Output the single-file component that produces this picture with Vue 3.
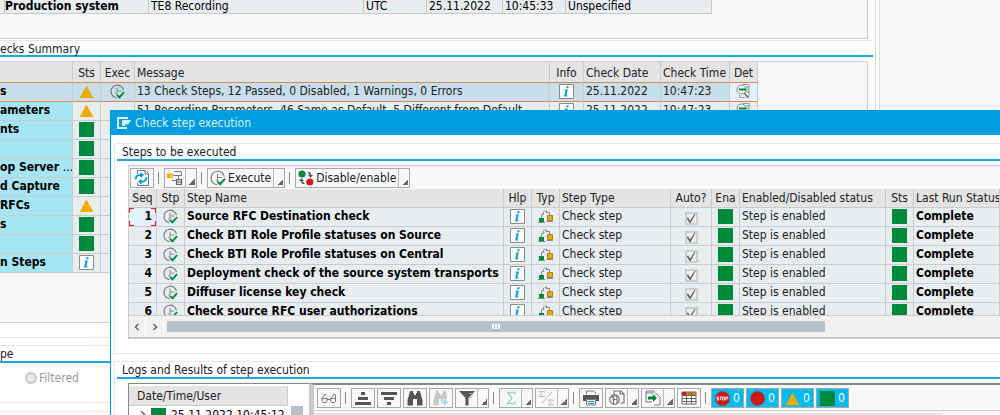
<template>
    <div class="screen">
        <svg class="sprite" aria-hidden="true">
            <symbol id="warn" viewBox="0 0 15 15"><path d="M7.5 1.5 14.3 14H.7z" fill="#f0ab00" /></symbol>
            <symbol id="ok" viewBox="0 0 15 15"><path d="M0 0h15v15H0z" fill="#008a3b" /></symbol>
            <symbol id="error" viewBox="0 0 15 15"><circle cx="7.5" cy="7.5" r="7.2" fill="#cc1919" /></symbol>
            <symbol id="stop" viewBox="0 0 15 15">
                <path d="M4.6.5h5.8l4.1 4.1v5.8l-4.1 4.1H4.6L.5 10.4V4.6z" fill="#cc1919" />
                <path d="M3.8 6H1.9v1.5h1.7V9H1.6M4.6 6h2.2M5.7 6v3.2M7.6 6h1.8v3H7.6zM10.8 9.4V6h2v1.7h-2" fill="none" stroke="#fff" stroke-width=".9" />
            </symbol>
            <symbol id="info" viewBox="0 0 15 15">
                <path d="M.5.5h14v14H.5z" fill="#fff" stroke="#8b8b8b" />
                <path d="M7.6 2.2h2.1l-.5 2H7.1zM5.7 5.5h3.1l-1.4 5.9h1.3l-.3 1.1H5.1l1.4-5.9H5.4z" fill="#009de0" />
            </symbol>
            <symbol id="exec" viewBox="0 0 16 16">
                <path d="M14.3 6.6A6.7 6.7 0 1 0 7 14.6" fill="none" stroke="#757575" stroke-width="1.2" />
                <path d="M7.5 4v6.5M5.5 10.5h2M7.500 7.500H12" fill="none" stroke="#858585" />
                <path d="m7.5 11.5 2.5 2.700L15 8.600" fill="none" stroke="#008a3b" stroke-width="2" />
            </symbol>
            <symbol id="detail" viewBox="0 0 15 15">
                <path d="M7 .5h6v13h-2" fill="none" stroke="#999" />
                <circle cx="5.5" cy="5.5" r="4.5" fill="#f4f8fa" stroke="#888" />
                <path d="M3 5.500h7" stroke="#008a3b" stroke-width="2" />
                <path d="M10 3h2.500M11 5.500h1.500M10 8h2.500" stroke="#3aa568" />
                <path d="m8 9 4 4.500" stroke="#777" stroke-width="1.800" /><path d="M3.500 13.500h5M3.500 11v2.500" stroke="#999" />
            </symbol>
            <symbol id="type" viewBox="0 0 15 15">
                <path d="M3.500 9V5.500h2M5.500 5.500V3M6 1.500l2 2h3.500v3M8.500 1.500v2" fill="none" stroke="#8a8a8a" />
                <path d="M1 9h5v4H1z" fill="#008a3b" /><path d="M9.500 6.500h5v5h-5z" fill="#f0ab00" stroke="#a88030" />
                <path d="M0 13.500h7M8.500 12.500h6.500" stroke="#888" />
            </symbol>
            <symbol id="refresh" viewBox="0 0 16 16">
                <path d="M3.500 4V.5h8l3 3v12h-11V13" fill="#fff" stroke="#777" /><path d="M11 .5v3.500h3.500" fill="none" stroke="#777" />
                <path d="M1.500 9.500C1.500 6 4 4.800 7 5M12.500 7c0 3.600-2.500 5-5.500 4.700" fill="none" stroke="#009de0" stroke-width="1.800" />
                <path d="m6.500 2 3.500 3-3.500 3zM7.500 8.700v6L4 11.700z" fill="#009de0" />
            </symbol>
            <symbol id="tree" viewBox="0 0 16 16">
                <path d="M0 3.500h6V8H0z" fill="#f0ab00" /><path d="m3 5.700 1 1 2-2" fill="none" stroke="#fff" />
                <path d="M6 5.500h5M7 1.500h7.500v4H11M5 10.500h4M11.500 6v3" fill="none" stroke="#777" />
                <path d="M9.500 9.500h5v5h-5zM9.500 12h5" fill="#ddd" stroke="#666" stroke-width="1.200" />
            </symbol>
            <symbol id="toggle" viewBox="0 0 16 16">
                <circle cx="4" cy="4" r="3.600" fill="#008a3b" /><circle cx="11.800" cy="12" r="3.600" fill="#cc1919" />
                <path d="M10 2.500c2 0 2.500 1.500 2.500 3.500M3.500 10c0 2 .8 3.500 3 3.500" fill="none" stroke="#555" stroke-width="1.500" />
                <path d="M10 5h5l-2.500 2.800zM1 11l2.500-2.800L6 11z" fill="#555" />
            </symbol>
            <symbol id="glasses" viewBox="0 0 16 16">
                <g fill="none" stroke="#777"><path d="M1 8.500h5v2.500l-1 1.500H2L1 11zM9.500 8.500h5V11l-1 1.500h-3l-1-1.500zM6 9.500h3.500M1 8.500 4 4l1.500 1M10 8.500 13 4l1.500 1v3.500" /></g>
            </symbol>
            <symbol id="asc" viewBox="0 0 16 16"><path d="M6 2h4v3H6zM3 7h10v3H3zM0 12h16v3H0z" fill="#555" /></symbol>
            <symbol id="desc" viewBox="0 0 16 16"><path d="M0 2h16v3H0zM3 7h10v3H3zM6 12h4v3H6z" fill="#555" /></symbol>
            <symbol id="find" viewBox="0 0 16 16"><path d="M3 1h3v2h1v2h2V3h1V1h3l1 4 1.500 5v5.500H10V9H6v6.500H.5V10L2 5z" fill="#555" /></symbol>
            <symbol id="findnext" viewBox="0 0 16 16">
                <path d="M3 1h3v2h1v2h2V3h1V1h3l1 4v4h-4v2H8V9H6v6.500H.5V10L2 5z" fill="#c8c8c8" />
                <path d="M12 9v6.500M8.800 12.200h6.500" stroke="#a5d9f5" stroke-width="2" />
            </symbol>
            <symbol id="filter" viewBox="0 0 16 16">
                <path d="M0 1h16L9.500 8v7.500h-3V8z" fill="#555" /><path d="M10 3.500h3v3L10 9" fill="none" stroke="#aaa" />
            </symbol>
            <symbol id="sum" viewBox="0 0 16 16"><path d="M12 5V2.500H4.500L9 8l-4.500 5.500H12V11" fill="none" stroke="#9ed5b2" stroke-width="1.300" /></symbol>
            <symbol id="subtotal" viewBox="0 0 16 16">
                <path d="M5.500 2.500v-1H.5L3 4 .5 6.500h5v-1M14.500 11v-1h-5L12 12.500 9.500 15h5v-1M13 2 3 13" fill="none" stroke="#bbb" />
            </symbol>
            <symbol id="print" viewBox="0 0 16 16">
                <path d="M3.500 4V1h7l2 2v1" fill="none" stroke="#777" /><path d="M0 5h16v6h-3V9H3v2H0z" fill="#555" />
                <path d="M3.500 9.500h9v5.500h-9z" fill="#fff" stroke="#777" /><path d="M5 11.500h6M5 13.500h6" stroke="#009de0" />
            </symbol>
            <symbol id="views" viewBox="0 0 16 16">
                <g fill="none" stroke="#777" stroke-width="1.200"><circle cx="5.500" cy="9.500" r="4.800" /><path d="M5 4V1h7l3 3v9h-4M11 1v3h3M8 14V6H3v2M3.500 9.500H8M4.500 6v8" /></g>
            </symbol>
            <symbol id="export" viewBox="0 0 16 16">
                <path d="M9 3V1H1v11h6M10 4h2l3 3v8H9" fill="none" stroke="#777" /><path d="M1 3h7" stroke="#777" />
                <path d="M3 6.500h5V4l4 4-4 4V9.500H3z" fill="#008a3b" />
            </symbol>
            <symbol id="layout" viewBox="0 0 16 16">
                <path d="M1 2h14v12H1z" fill="#fff" stroke="#666" /><path d="M1 2h4v3H1z" fill="#cc1919" /><path d="M5 2h10v3H5z" fill="#c27b16" />
                <path d="M1 5.500h14M1 8.500h14M1 11.500h14M5.500 5v9M10.500 2v12" stroke="#666" />
            </symbol>
        </svg>

        <main class="main">
            <section class="system">
                <div class="system-row">
                    <span></span><b>Production system</b><span>TE8 Recording</span><span>UTC</span>
                    <span>25.11.2022</span><span>10:45:33</span><span>Unspecified</span>
                </div>
            </section>
            <h2 class="main-title">ecks Summary</h2>
            <div class="summary">
                <table class="grid">
                    <colgroup>
                        <col class="w-name"><col class="w-icon"><col class="w-exec"><col><col class="w-exec">
                        <col class="w-date"><col class="w-time"><col class="w-icon">
                    </colgroup>
                    <thead>
                        <tr>
                            <th></th><th class="center">Sts</th><th class="center">Exec</th><th>Message</th>
                            <th class="center">Info</th><th>Check Date</th><th>Check Time</th><th class="center">Det</th>
                        </tr>
                    </thead>
                    <tbody>
                        <tr v-for="(row, i) in checks" :key="i" :class="{ selected: i === 0 }">
                            <td class="name">{{ row.name }} <span v-if="row.more">...</span></td>
                            <td class="center"><svg class="icon"><use :href="'#' + row.status" /></svg></td>
                            <td class="center"><svg v-if="i === 0" class="icon"><use href="#exec" /></svg></td>
                            <td>{{ row.message }}</td>
                            <td class="center"><svg v-if="row.message" class="icon"><use href="#info" /></svg></td>
                            <td>{{ row.message && '25.11.2022' }}</td>
                            <td>{{ row.message && '10:47:23' }}</td>
                            <td class="center det"><svg v-if="row.message" class="icon"><use href="#detail" /></svg></td>
                        </tr>
                    </tbody>
                </table>
            </div>
            <div class="panel-end"></div>
            <section class="type">
                <h2 class="main-title">pe</h2>
                <label class="radio"><input type="radio" name="type" disabled>Filtered</label>
            </section>
            <div class="footer-line"></div>
        </main>
        <aside class="side"></aside>

        <div class="dialog" role="dialog" aria-labelledby="dialog-title">
            <header class="dialog-head">
                <svg viewBox="0 0 15 12"><path d="M11 1H1v10h9" fill="none" stroke="#d9f0fb" stroke-width="2" /><path d="M5 3h9.500L11 7.500H8V9H5z" fill="#d9f0fb" /></svg>
                <span id="dialog-title">Check step execution</span>
            </header>
            <section class="group">
                <h3>Steps to be executed</h3>
                <div class="box">
                    <div class="toolbar">
                        <button class="btn square" aria-label="Refresh"><svg><use href="#refresh" /></svg></button>
                        <i class="sep"></i>
                        <span class="split"><button class="btn" aria-label="Hierarchy"><svg><use href="#tree" /></svg></button><button class="drop" aria-label="Hierarchy menu"></button></span>
                        <i class="sep"></i>
                        <span class="split"><button class="btn"><svg><use href="#exec" /></svg>Execute</button><button class="drop" aria-label="Execute menu"></button></span>
                        <i class="sep"></i>
                        <span class="split"><button class="btn"><svg><use href="#toggle" /></svg>Disable/enable</button><button class="drop" aria-label="Disable/enable menu"></button></span>
                    </div>
                    <div class="steps">
                        <table class="grid">
                            <colgroup>
                                <col class="w-icon"><col class="w-icon"><col class="w-step"><col class="w-icon"><col class="w-icon">
                                <col class="w-type"><col class="w-auto"><col class="w-icon"><col class="w-enabled"><col class="w-icon"><col>
                            </colgroup>
                            <thead>
                                <tr>
                                    <th class="center">Seq</th><th class="center">Stp</th><th>Step Name</th><th class="center">Hlp</th>
                                    <th class="center">Typ</th><th>Step Type</th><th class="center">Auto?</th><th class="center">Ena</th>
                                    <th>Enabled/Disabled status</th><th class="center">Sts</th><th>Last Run Status</th>
                                </tr>
                            </thead>
                            <tbody>
                                <tr v-for="(step, i) in steps" :key="step">
                                    <td class="seq" :class="{ current: i === 0 }">{{ i + 1 }}</td>
                                    <td class="center"><svg class="icon"><use href="#exec" /></svg></td>
                                    <td class="bold">{{ step }}</td>
                                    <td class="center"><svg class="icon"><use href="#info" /></svg></td>
                                    <td class="center"><svg class="icon"><use href="#type" /></svg></td>
                                    <td>Check step</td>
                                    <td class="center"><input type="checkbox" checked disabled :aria-label="'Auto ' + step"></td>
                                    <td class="center"><svg class="icon"><use href="#ok" /></svg></td>
                                    <td>Step is enabled</td>
                                    <td class="center"><svg class="icon"><use href="#ok" /></svg></td>
                                    <td class="bold">Complete</td>
                                </tr>
                            </tbody>
                        </table>
                    </div>
                    <div class="scroll">
                        <button aria-label="Scroll left"><svg viewBox="0 0 6 8"><path d="M4.500 1 1.500 4l3 3" /></svg></button>
                        <button aria-label="Scroll right"><svg viewBox="0 0 6 8"><path d="m1.500 1 3 3-3 3" /></svg></button>
                        <div class="thumb"><i></i><i></i><i></i></div>
                    </div>
                </div>
            </section>
            <section class="group logs">
                <h3>Logs and Results of step execution</h3>
                <div class="panes">
                    <div class="tree">
                        <div class="tree-list">
                            <div class="tree-head">Date/Time/User</div>
                            <div class="tree-row">
                                <svg class="chevron" viewBox="0 0 6 8"><path d="m1 0 4 4-4 4" /></svg>
                                <svg class="icon"><use href="#ok" /></svg>
                                <span>25.11.2022 10:45:12</span>
                            </div>
                        </div>
                        <div class="tree-scroll"></div>
                    </div>
                    <div class="result">
                        <div class="toolbar">
                            <template v-for="(tool, i) in tools" :key="i">
                                <i v-if="tool === '|'" class="sep"></i>
                                <span v-else-if="tool.menu" class="split">
                                    <button class="btn" :aria-label="tool.icon"><svg><use :href="'#' + tool.icon" /></svg></button>
                                    <button class="drop" :aria-label="tool.icon + ' menu'"></button>
                                </span>
                                <button v-else class="btn square" :aria-label="tool.icon"><svg><use :href="'#' + tool.icon" /></svg></button>
                            </template>
                            <button v-for="s in ['stop', 'error', 'warn', 'ok']" :key="s" class="btn count">
                                <svg><use :href="'#' + s" /></svg>0
                            </button>
                        </div>
                        <div class="result-head"><span></span></div>
                    </div>
                </div>
            </section>
        </div>
    </div>
</template>

<script setup>
const checks = [
    { name: 's', status: 'warn', message: '13 Check Steps, 12 Passed, 0 Disabled, 1 Warnings, 0 Errors' },
    { name: 'ameters', status: 'warn', message: '51 Recording Parameters, 46 Same as Default, 5 Different from Default' },
    { name: 'nts', status: 'ok' },
    { name: '', status: 'ok' },
    { name: 'op Server', status: 'ok', more: true },
    { name: 'd Capture', status: 'ok' },
    { name: 'RFCs', status: 'warn' },
    { name: 's', status: 'ok' },
    { name: '', status: 'ok' },
    { name: 'n Steps', status: 'info' },
];

const steps = [
    'Source RFC Destination check',
    'Check BTI Role Profile statuses on Source',
    'Check BTI Role Profile statuses on Central',
    'Deployment check of the source system transports',
    'Diffuser license key check',
    'Check source RFC user authorizations',
];

const tools = [
    { icon: 'glasses' },
    '|',
    { icon: 'asc' },
    { icon: 'desc' },
    { icon: 'find' },
    { icon: 'findnext' },
    { icon: 'filter', menu: true },
    '|',
    { icon: 'sum', menu: true },
    { icon: 'subtotal', menu: true },
    '|',
    { icon: 'print' },
    { icon: 'views', menu: true },
    { icon: 'export', menu: true },
    { icon: 'layout' },
    '|',
];
</script>

<style>
body {
    overflow: hidden;
}
</style>

<style scoped>
.screen {
    position: relative;
    display: flex;
    height: 100vh;
    overflow: hidden;
    background: #fff;
    color: #222;
    font: 12px/16px Tahoma, "DejaVu Sans Condensed", "DejaVu Sans", sans-serif;
    white-space: nowrap;
}

.screen * {
    box-sizing: border-box;
}

.sprite {
    position: absolute;
    width: 0;
    height: 0;
}

h2,
h3 {
    margin: 0;
    font-size: 12px;
    font-weight: normal;
}

button {
    padding: 0;
    border: 0;
    background: none;
    color: inherit;
    font: inherit;
}

.main {
    flex: 1;
    min-width: 0;
    border-right: 1px solid #ddd;
}

.side {
    flex: 0 0 121px;
    margin-left: 3px;
    border-left: 1px solid #ddd;
    background: #f9f9f9;
}

.system {
    height: 39px;
    margin-right: 7px;
    border: solid #c9c9c9;
    border-width: 0 1px 1px 0;
    background: #f9f9f9;
}

.system-row {
    display: grid;
    grid-template-columns: 3px 146px 215px 63px 76px 63px 146px;
    align-items: end;
    width: 712px;
    height: 14px;
    overflow: hidden;
    border-bottom: 1px solid #c9c9c9;
    background: #e8edf0;
    color: #000;
}

.system-row > * {
    height: 18px;
    padding: 0 2px;
    border-right: 1px solid #c9c9c9;
    line-height: 12px;
}

.main-title {
    height: 18px;
    border-top: 1px solid #e8e8e8;
    border-bottom: 2px solid #1ba7e3;
    margin-right: 2px;
}

.system + .main-title {
    margin-top: 1px;
    height: 17px;
}

.summary {
    height: 262px;
    margin: 4px 7px 0 0;
    padding-right: 109px;
    border: solid #d0d0d0;
    border-width: 1px 1px 1px 0;
    background: #f7f7f7;
}

.grid {
    width: 100%;
    table-layout: fixed;
    border-collapse: separate;
    border-spacing: 0;
}

.grid th,
.grid td {
    height: 19px;
    padding: 0 0 0 2px;
    overflow: hidden;
    border: solid #cbcbcb;
    border-width: 0 1px 1px 0;
    background: #e8edf0;
    font-weight: normal;
    text-align: left;
    vertical-align: top;
}

.grid th {
    padding-top: 1px;
    background: #e4e4e4;
}

.grid td.center {
    padding: 0;
}

.grid .center {
    padding-left: 0;
    text-align: center;
}

.grid.grid .bold,
.grid.grid .name,
.grid.grid .seq {
    color: #000;
    font-weight: bold;
}

.summary th {
    height: 21px;
    padding-top: 3px;
    border-bottom-color: #dd8a58;
}

.summary .name {
    padding: 0;
    background: #a6e5f4;
}

.name span {
    font-weight: normal;
}

.summary .selected td {
    border-bottom-color: #dd8a58;
    background: #c7dfea;
}

.summary .selected .det {
    background: #e5f2fb;
}

.icon {
    display: block;
    width: 15px;
    height: 15px;
    margin: 1px auto 0;
}

.w-name {
    width: 73px;
}

.w-icon {
    width: 28px;
}

.w-exec {
    width: 34px;
}

.w-date {
    width: 77px;
}

.w-time {
    width: 69px;
}

.w-step {
    width: 319px;
}

.w-type {
    width: 111px;
}

.w-auto {
    width: 41px;
}

.w-enabled {
    width: 146px;
}

.panel-end {
    height: 15px;
    border-bottom: 1px solid #e8e8e8;
}

.type {
    height: 58px;
    margin-top: 7px;
    border-bottom: 1px solid #e8e8e8;
}

.radio {
    display: flex;
    align-items: center;
    gap: 2px;
    padding: 7px 0 0 25px;
    color: #999;
}

.radio input {
    width: 12px;
    height: 12px;
    margin: 0;
    appearance: none;
    border: 2px solid #c8c8c8;
    border-radius: 50%;
    background: #e4e8ea;
}

.footer-line {
    height: 9px;
    border-bottom: 1px solid #e8e8e8;
}

.dialog {
    position: absolute;
    inset: 110px 0 0 110px;
    overflow: hidden;
    border-left: 1px solid #009de0;
    background: #fff;
}

.dialog-head {
    display: flex;
    align-items: center;
    gap: 3px;
    height: 25px;
    padding-left: 6px;
    background: #009de0;
    color: #d9f0fb;
}

.dialog-head svg {
    width: 15px;
    height: 12px;
}

.group {
    height: 211px;
    margin: 8px 0 0 3px;
    border: solid #e8e8e8;
    border-width: 1px 0 1px 1px;
}

.group h3 {
    height: 17px;
    margin-left: 2px;
    padding-left: 5px;
    border-bottom: 2px solid #1ba7e3;
}

.box {
    margin: 4px 0 0 13px;
    border: solid #c9c9c9;
    border-width: 1px 0 2px 1px;
    background: #f9f9f9;
}

.toolbar {
    display: flex;
    align-items: center;
    gap: 2px;
    height: 23px;
    padding-left: 1px;
    background: #f9f9f9;
}

.btn {
    display: flex;
    align-items: center;
    justify-content: center;
    gap: 2px;
    height: 20px;
    padding: 0 2px;
}

.btn svg {
    width: 16px;
    height: 16px;
}

.square,
.split,
.count {
    border: 1px solid #a9a9a9;
    background: #f9f9f9;
}

.square {
    width: 24px;
}

.split {
    display: flex;
    height: 20px;
}

.split .btn {
    height: 18px;
}

.drop {
    width: 11px;
    border-left: 1px solid #b9b9b9;
    background: linear-gradient(135deg, transparent 50%, #666 50%) 3px 10px / 6px 6px no-repeat;
}

.sep {
    width: 2px;
    height: 12px;
    margin: 0 2px;
    border-left: 1px solid #888;
}

.steps {
    height: 127px;
    overflow: hidden;
    border-bottom: 1px solid #cbcbcb;
}

.steps .seq {
    padding-right: 4px;
    text-align: right;
}

/* red corner brackets around the focused cell */
.steps .current {
    background:
        linear-gradient(#e02020, #e02020) 0 0 / 5px 1px,
        linear-gradient(#e02020, #e02020) 0 0 / 1px 5px,
        linear-gradient(#e02020, #e02020) 100% 0 / 5px 1px,
        linear-gradient(#e02020, #e02020) 100% 0 / 1px 5px,
        linear-gradient(#e02020, #e02020) 0 100% / 5px 1px,
        linear-gradient(#e02020, #e02020) 0 100% / 1px 5px,
        linear-gradient(#e02020, #e02020) 100% 100% / 5px 1px,
        linear-gradient(#e02020, #e02020) 100% 100% / 1px 5px,
        #e5f2fb;
    background-repeat: no-repeat;
}

.steps input {
    display: block;
    width: 13px;
    height: 13px;
    margin: 4px auto 0;
    appearance: none;
    border: 2px solid #cdcdcd;
    background: #eee;
}

.steps input::before {
    content: "";
    display: block;
    width: 9px;
    height: 9px;
    background: #666;
    clip-path: polygon(0 45%, 18% 40%, 40% 72%, 88% 0, 100% 0, 46% 100%, 34% 100%);
}

.scroll {
    display: flex;
    gap: 1px;
    height: 21px;
    padding-top: 1px;
    background: #f1f1f1;
}

.scroll button {
    width: 17px;
    height: 19px;
    border-right: 1px solid #fff;
}

.scroll button svg {
    display: block;
    width: 6px;
    height: 8px;
    margin: 0 auto;
}

.scroll path,
.chevron path {
    fill: none;
    stroke: #666;
    stroke-width: 1.5;
}

.thumb {
    display: flex;
    align-items: center;
    justify-content: center;
    gap: 1px;
    width: 658px;
    height: 11px;
    margin: 4px 0 0 2px;
    background: #b6c1cb;
}

.thumb i {
    width: 2px;
    height: 5px;
    background: #fff;
}

.logs {
    height: 100px;
    margin-top: 7px;
}

.panes {
    display: flex;
    margin: 4px 0 0 13px;
}

.tree {
    display: flex;
    flex: 0 0 181px;
    padding-top: 2px;
    border: solid #888;
    border-width: 1px 0 0 1px;
}

.tree-list {
    flex: 1;
}

.tree-head {
    height: 20px;
    padding: 2px 0 0 8px;
    border-right: 1px solid #ccc;
    border-bottom: 1px solid #ccc;
    background: #e4e4e4;
}

.tree-row {
    display: flex;
    align-items: center;
    gap: 5px;
    padding: 1px 0 0 11px;
    color: #000;
}

.tree-row .icon {
    flex: none;
    margin: 0;
}

.chevron {
    width: 6px;
    height: 8px;
}

.tree-scroll {
    width: 12px;
    margin: 20px 6px 0 3px;
    background: #b6c1cb;
}

.result {
    flex: 1;
    min-width: 0;
    border: solid #c9c9c9;
    border-width: 2px 0 0 5px;
    border-top-color: #888;
}

.result .toolbar {
    height: 25px;
    padding: 1px 0 0 3px;
}

.result .split .btn {
    width: 21px;
}

.count {
    width: 33px;
    gap: 3px;
    background: #00baf2;
    color: #fff;
}

.count svg {
    width: 15px;
    height: 15px;
}

.result-head {
    height: 20px;
    padding-top: 2px;
    border-top: 1px solid #ccc;
    background: #f9f9f9;
}

.result-head span {
    display: block;
    width: 628px;
    height: 19px;
    background: #e4e4e4;
}
</style>
